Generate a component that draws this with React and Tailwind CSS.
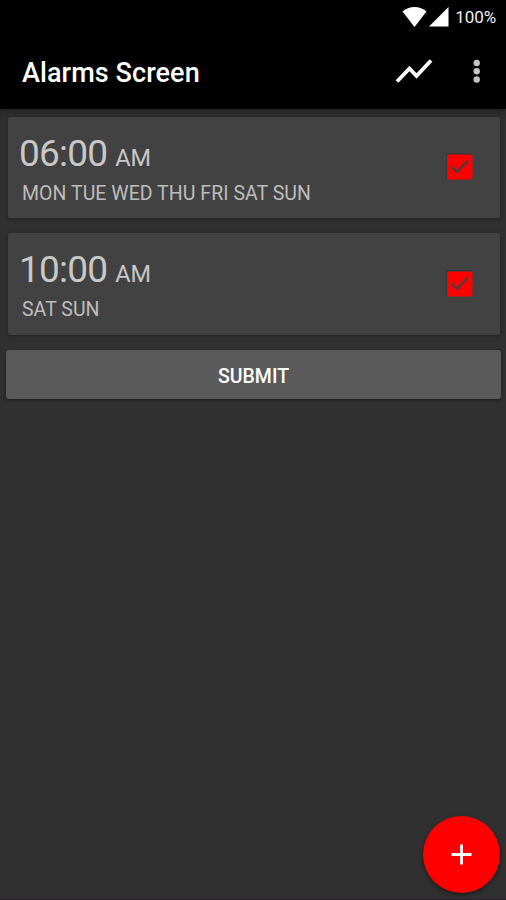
const alarms = [
  { time: '06:00', period: 'AM', days: 'MON TUE WED THU FRI SAT SUN' },
  { time: '10:00', period: 'AM', days: 'SAT SUN' },
];

function StatusBar() {
  return (
    <div className="flex h-[34px] items-center justify-end pr-[10px]">
      <svg className="h-[34px] w-[50px]" viewBox="0 0 50 34" fill="#fff">
        <path d="M0.5 11.5 Q5.5 7 12.5 7 T24.5 11.5 L12.5 27Z" />
        <path d="M46.5 7V26.5H27Z" />
      </svg>
      <span className="ml-[3px] text-[17px] leading-[34px] tracking-[-0.1px] text-[#eee]">100%</span>
    </div>
  );
}

function AppBar() {
  return (
    <div className="flex h-[75px] items-center pl-[22px]">
      <h1 className="flex-1 pt-[4px] text-[27px] leading-[71px] font-medium tracking-[0.08px]">Alarms Screen</h1>
      <svg className="h-[75px] w-[40px]" viewBox="394 34 40 75" fill="none" stroke="#fff" strokeWidth="3.8">
        <path d="M397 81.5L409.5 68.5L416.5 76L431 60.5" />
      </svg>
      <svg className="mr-[19px] ml-[33px] h-[75px] w-[20px]" viewBox="467 34 20 75" fill="#c4c4c4">
        <circle cx="476.7" cy="63" r="3.2" />
        <circle cx="476.7" cy="71.3" r="3.2" />
        <circle cx="476.7" cy="79.5" r="3.2" />
      </svg>
    </div>
  );
}

function AlarmCard({ time, period, days }) {
  return (
    <div className="flex h-[101.4px] items-center justify-between rounded-[2px] bg-[#424242] pr-[27px] pl-[11px] shadow-[0_1px_4px_rgba(0,0,0,0.3)]">
      <div className="h-full text-[#c8c8c8]">
        <div className="mt-[14px] flex h-[46px] items-baseline whitespace-nowrap">
          <span className="text-[37px] leading-[46px] tracking-[-0.8px]">{time}</span>
          <span className="ml-[8px] text-[23.5px]">{period}</span>
        </div>
        <div className="mt-[3px] ml-[3px] text-[19.5px] leading-[28px] tracking-[0.04px] whitespace-nowrap text-[#bdbdbd]">{days}</div>
      </div>
      <svg className="mb-[1.4px] h-[27px] w-[27px]" viewBox="0 0 27 27" role="checkbox" aria-checked="true">
        <rect width="26" height="26" rx="2" fill="#303c3c" />
        <rect x="1" y="1.5" width="25.5" height="25" rx="2" fill="#f00" />
        <path d="M5.5 13.5L11 19L22 7.5" fill="none" stroke="#3c4444" strokeWidth="2.2" />
      </svg>
    </div>
  );
}

export default function App() {
  return (
    <div className="flex h-[900px] w-[506px] flex-col overflow-hidden bg-[#303030] font-[Roboto,sans-serif] text-white">
      <header className="h-[109px] bg-black shadow-[0_2px_7px_rgba(0,0,0,0.4)]">
        <StatusBar />
        <AppBar />
      </header>
      <main className="flex flex-1 flex-col">
        <div className="mt-[7.6px] mr-[6.5px] ml-[8px] flex flex-col gap-[15.2px]">
          {alarms.map((alarm) => (
            <AlarmCard key={alarm.time} {...alarm} />
          ))}
        </div>
        <button className="mt-[15.4px] mr-[5px] ml-[6px] h-[49px] rounded-[3px] bg-[#5a5a5b] pt-[4px] text-[19.5px] font-medium shadow-[0_1px_3px_rgba(0,0,0,0.5)]">
          SUBMIT
        </button>
        <button
          aria-label="Add alarm"
          className="mt-auto mr-[6px] mb-[6px] flex h-[77px] w-[77px] items-center justify-center self-end rounded-full bg-[#f00] shadow-[0_2px_4px_rgba(0,0,0,0.45)]"
        >
          <svg className="h-[21px] w-[21px]" viewBox="0 0 21 21" stroke="#fff" strokeWidth="2.8">
            <path d="M10.5 0.5V20.5M0.5 10.5H20.5" />
          </svg>
        </button>
      </main>
      <div className="h-px bg-[#282228]" />
    </div>
  );
}
